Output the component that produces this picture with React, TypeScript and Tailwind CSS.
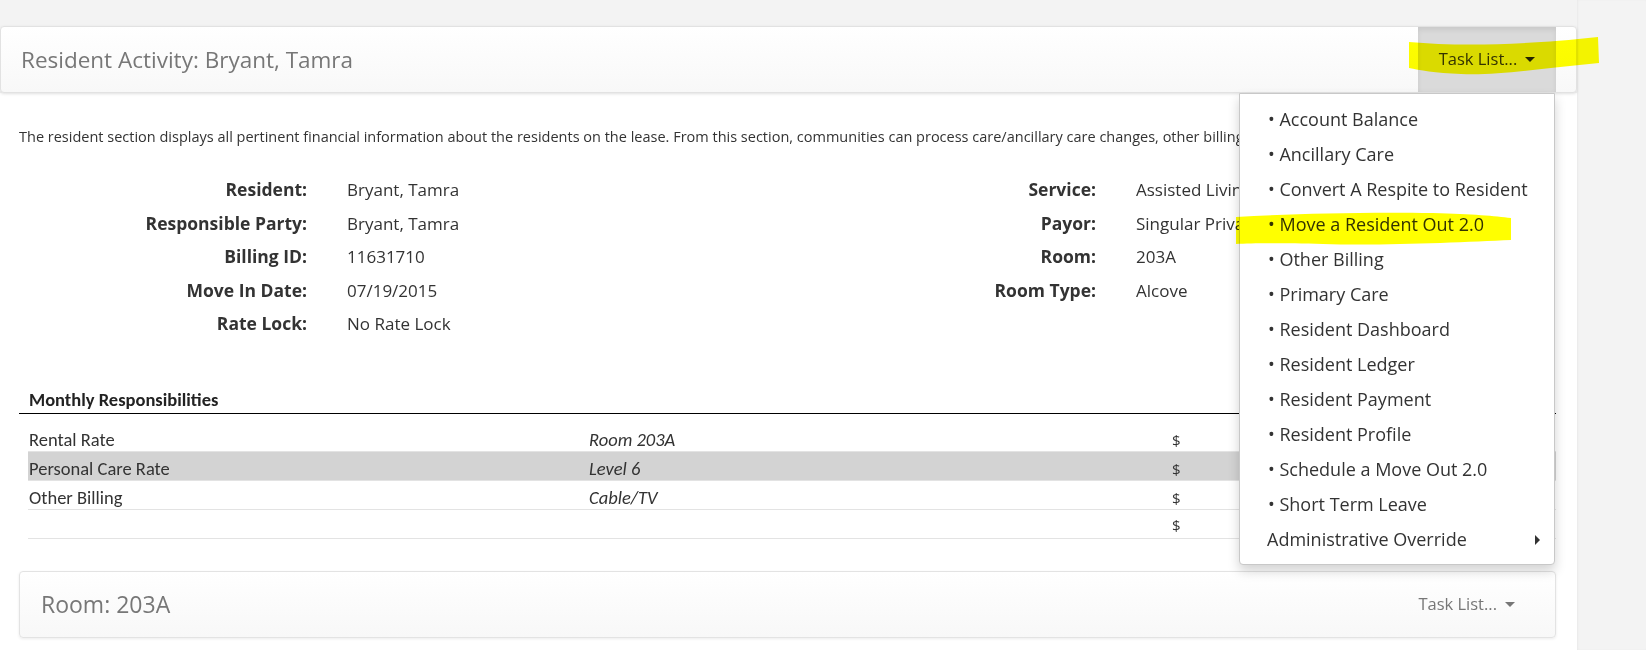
import React from 'react'

const segoe = { fontFamily: '"Open Sans", "Noto Sans", Arial, sans-serif' }
const calibri = { fontFamily: 'Carlito, Lato, "Noto Sans", Arial, sans-serif' }

const tasks = [
  'Account Balance',
  'Ancillary Care',
  'Convert A Respite to Resident',
  'Move a Resident Out 2.0',
  'Other Billing',
  'Primary Care',
  'Resident Dashboard',
  'Resident Ledger',
  'Resident Payment',
  'Resident Profile',
  'Schedule a Move Out 2.0',
  'Short Term Leave',
]

const leftInfo = [
  ['Resident:', 'Bryant, Tamra'],
  ['Responsible Party:', 'Bryant, Tamra'],
  ['Billing ID:', '11631710'],
  ['Move In Date:', '07/19/2015'],
  ['Rate Lock:', 'No Rate Lock'],
]

const rightInfo = [
  ['Service:', 'Assisted Living'],
  ['Payor:', 'Singular Private Pay'],
  ['Room:', '203A'],
  ['Room Type:', 'Alcove'],
]

const charges = [
  { name: 'Rental Rate', detail: 'Room 203A', shaded: false },
  { name: 'Personal Care Rate', detail: 'Level 6', shaded: true },
  { name: 'Other Billing', detail: 'Cable/TV', shaded: false },
  { name: '', detail: '', shaded: false },
]

function Caret({ light }: { light?: boolean }) {
  return (
    <span
      className={`ml-2 inline-block h-0 w-0 border-x-[5px] border-t-[5px] border-x-transparent ${
        light ? 'border-t-[#777]' : 'border-t-[#222]'
      }`}
    />
  )
}

function InfoRows({ rows, labelWidth }: { rows: string[][]; labelWidth: string }) {
  return (
    <div className={`grid ${labelWidth} gap-x-[40px]`}>
      {rows.map(([label, value]) => (
        <React.Fragment key={label}>
          <div className="h-[33.6px] text-right text-[17.5px] leading-[33.6px] font-bold whitespace-nowrap text-[#333]">{label}</div>
          <div className="h-[33.6px] whitespace-nowrap text-[17px] leading-[33.6px] text-[#333]">{value}</div>
        </React.Fragment>
      ))}
    </div>
  )
}

export default function App() {
  return (
    <div className="flex min-h-screen bg-[#f3f3f3]" style={segoe}>
      <div className="relative w-[1577px] shrink-0 bg-white">
        <div className="bg-[#f3f3f3] pt-[26px]">
          <div className="flex h-[67px] items-stretch justify-between rounded-[4px] border border-[#e2e2e2] bg-gradient-to-b from-white to-[#f8f8f8] shadow-[0_1px_3px_rgba(0,0,0,0.12)]">
            <div className="flex items-center pl-[20px] text-[22.5px] text-[#777]">Resident Activity: Bryant, Tamra</div>
            <button
              type="button"
              className="mr-[20px] flex w-[138px] items-center justify-center bg-[#dadada] text-[16.5px] text-[#333] shadow-[inset_0_3px_5px_rgba(0,0,0,0.08)]"
            >
              Task List...
              <Caret />
            </button>
          </div>
        </div>

        <div className="pl-[19px]">
          <p className="mt-[34px] overflow-hidden whitespace-nowrap text-[14.5px] leading-[20px] text-[#333]">
            The resident section displays all pertinent financial information about the residents on the lease. From this section, communities can process care/ancillary care changes, other billing changes and resident move outs.
          </p>

          <div className="mt-[26px] flex">
            <div className="w-[760px]">
              <InfoRows rows={leftInfo} labelWidth="grid-cols-[288px_1fr]" />
            </div>
            <div>
              <InfoRows rows={rightInfo} labelWidth="grid-cols-[317px_1fr]" />
            </div>
          </div>

          <div className="mt-[49px] w-[1537px]" style={calibri}>
            <div className="border-b border-black pb-[3px] pl-[10px] text-[18.5px] leading-[20px] font-bold text-[#222]">
              Monthly Responsibilities
            </div>
            <div className="ml-[9px] pt-[9px]">
              {charges.map((c, i) => (
                <div
                  key={i}
                  className={`grid h-[29px] grid-cols-[560px_583px_1fr] items-center border-b border-[#e3e3e3] pt-[3px] pl-px text-[18.5px] text-[#333] ${
                    c.shaded ? 'bg-[#d3d3d3]' : ''
                  }`}
                >
                  <span>{c.name}</span>
                  <span className="italic">{c.detail}</span>
                  <span style={segoe} className="text-[15px]">$</span>
                </div>
              ))}
            </div>
          </div>

          <div className="mt-[32px] flex h-[67px] w-[1537px] items-center justify-between rounded-[4px] border border-[#e3e3e3] bg-gradient-to-b from-white to-[#f8f8f8] pr-[40px] pl-[21px] shadow-[0_1px_3px_rgba(0,0,0,0.08)]">
            <span className="text-[23px] text-[#777]">Room: 203A</span>
            <span className="flex items-center text-[16.5px] text-[#777]">
              Task List...
              <Caret light />
            </span>
          </div>
        </div>

        {/* open task list menu */}
        <div className="absolute top-[93px] left-[1239px] w-[316px] rounded-b-[4px] border border-[#c8c8c8] bg-white pt-[8px] pb-[7px] shadow-[0_6px_12px_rgba(0,0,0,0.175)]">
          {tasks.map((t) => (
            <div key={t} className="h-[35px] pl-[28px] text-[18px] leading-[35px] text-[#333]">
              • {t}
            </div>
          ))}
          <div className="flex h-[35px] items-center justify-between pr-[14px] pl-[27px] text-[18px] text-[#333]">
            Administrative Override
            <span className="h-0 w-0 border-y-[5px] border-l-[5px] border-y-transparent border-l-[#333]" />
          </div>
        </div>

        {/* marker highlights */}
        <svg className="pointer-events-none absolute top-[34px] left-[1405px] mix-blend-multiply" width="200" height="44" viewBox="0 0 200 44">
          <path d="M4 8 C50 12 110 12 193 3 L194 29 C140 34 90 42 56 40 C30 39 14 36 4 34 Z" fill="#ffff00" />
        </svg>
        <svg className="pointer-events-none absolute top-[210px] left-[1233px] mix-blend-multiply" width="282" height="38" viewBox="0 0 282 38">
          <path d="M3 7 C60 4 120 2 200 3 C240 4 262 6 278 8 L278 30 C230 32 150 36 90 34 C50 33 20 33 3 34 Z" fill="#ffff00" />
        </svg>
      </div>
      <div className="flex-1 bg-[#f3f3f3] shadow-[inset_1px_0_2px_rgba(0,0,0,0.04)]" />
    </div>
  )
}
